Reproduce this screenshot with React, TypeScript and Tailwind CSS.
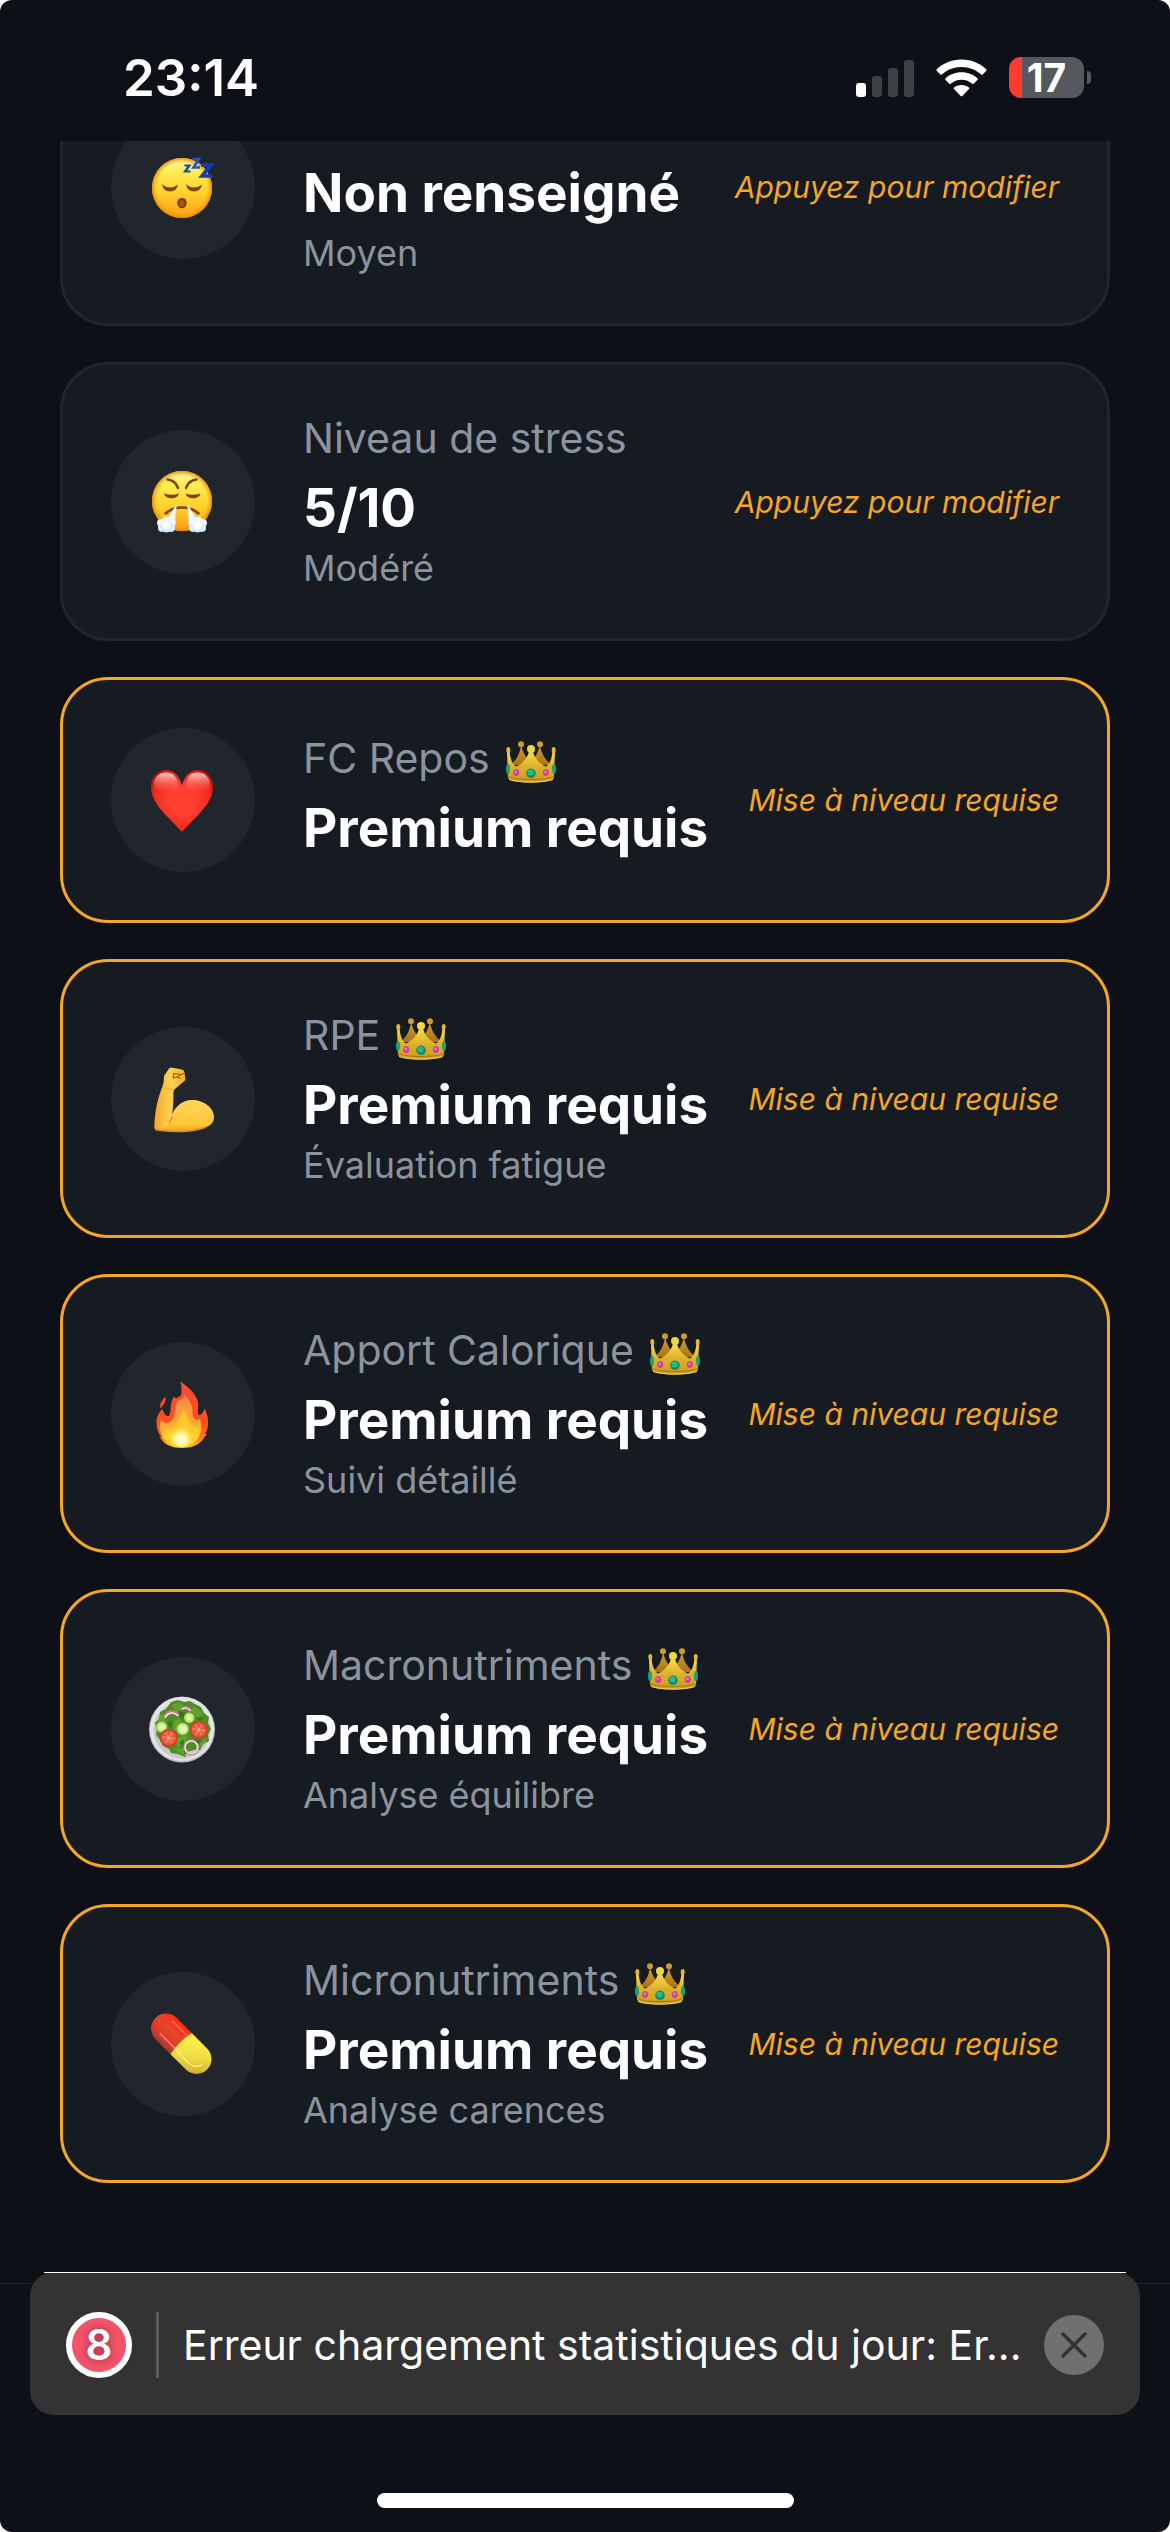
import type { ReactNode } from "react";

function FaceGradient({ id }: { id: string }) {
  return (
    <defs>
      <linearGradient id={id} x1="0" y1="0" x2="0" y2="1">
        <stop offset="0" stopColor="#fff6a8" />
        <stop offset="0.22" stopColor="#ffee55" />
        <stop offset="0.6" stopColor="#ffcf2b" />
        <stop offset="1" stopColor="#fb9d16" />
      </linearGradient>
      <radialGradient id={id + "Rim"} cx="0.5" cy="0.5" r="0.5">
        <stop offset="0.84" stopColor="#f59500" stopOpacity="0" />
        <stop offset="1" stopColor="#ee8a00" stopOpacity="0.9" />
      </radialGradient>
    </defs>
  );
}

function SleepIcon() {
  return (
    <svg viewBox="0 0 72 72" className="size-[72px]" aria-hidden="true">
      <FaceGradient id="sleep" />
      <circle cx="35" cy="37" r="30" fill="url(#sleep)" />
      <circle cx="35" cy="37" r="30" fill="url(#sleepRim)" />
      <path d="M15 33.5 Q23 39.5 31 33.5 Q29.5 40.5 23 40.5 Q16.5 40.5 15 33.5Z" fill="#7d4300" />
      <path d="M39 33.5 Q47 39.5 55 33.5 Q53.5 40.5 47 40.5 Q40.5 40.5 39 33.5Z" fill="#7d4300" />
      <ellipse cx="35" cy="52" rx="4.7" ry="5.3" fill="#7a3d00" />
      <ellipse cx="35" cy="52.5" rx="2.6" ry="3.3" fill="#a35a05" />
      <g fill="none" strokeLinejoin="miter">
        <path d="M37.5 14.5 H42.5 L38 20.5 H43.5" stroke="#1746b5" strokeWidth="2.2" />
        <path d="M45.5 8 H52 L46.5 16.5 H53" stroke="#2456c8" strokeWidth="2.6" />
        <path d="M54 14 H64 L55 25 H65.5" stroke="#123db8" strokeWidth="3.6" />
      </g>
    </svg>
  );
}

function StressIcon() {
  return (
    <svg viewBox="0 0 72 72" className="size-[72px]" aria-hidden="true">
      <FaceGradient id="stress" />
      <defs>
        <radialGradient id="puff" cx="0.5" cy="0.4" r="0.6">
          <stop offset="0.4" stopColor="#ffffff" />
          <stop offset="1" stopColor="#bcdcf8" />
        </radialGradient>
      </defs>
      <circle cx="35" cy="35" r="30" fill="url(#stress)" />
      <circle cx="35" cy="35" r="30" fill="url(#stressRim)" />
      <g fill="none" stroke="#7d4300" strokeWidth="2.4" strokeLinecap="round">
        <path d="M20.5 13.5 Q28.5 14.5 31 22" />
        <path d="M49.5 13.5 Q41.5 14.5 39 22" />
        <path d="M18.5 47.5 Q25 41.5 35 41.5 Q45 41.5 51.5 47.5" />
      </g>
      <path d="M17 27.5 Q24.5 30 32 27.5 Q30.5 32.3 24.5 32.3 Q18.5 32.3 17 27.5Z" fill="#7d4300" />
      <path d="M38.5 27.5 Q46 30 53.5 27.5 Q52 32.3 46 32.3 Q40 32.3 38.5 27.5Z" fill="#7d4300" />
      <path d="M29.5 38.5 L28 55 L18 57Z" fill="#f4faff" stroke="#c9dff2" strokeWidth="0.6" />
      <path d="M40.5 38.5 L42 55 L52 57Z" fill="#f4faff" stroke="#c9dff2" strokeWidth="0.6" />
      <g fill="url(#puff)">
        <circle cx="14" cy="57" r="4" />
        <circle cx="19" cy="55" r="4.5" />
        <circle cx="25" cy="57" r="4" />
        <circle cx="15" cy="62" r="4" />
        <circle cx="24" cy="62" r="4" />
        <circle cx="19.5" cy="60" r="6.5" />
        <circle cx="56" cy="57" r="4" />
        <circle cx="51" cy="55" r="4.5" />
        <circle cx="45" cy="57" r="4" />
        <circle cx="55" cy="62" r="4" />
        <circle cx="46" cy="62" r="4" />
        <circle cx="50.5" cy="60" r="6.5" />
      </g>
    </svg>
  );
}

function HeartIcon() {
  return (
    <svg viewBox="0 0 72 72" className="size-[72px]" aria-hidden="true">
      <defs>
        <radialGradient id="heart" cx="0.5" cy="0.5" r="0.6">
          <stop offset="0.35" stopColor="#ff4030" />
          <stop offset="0.75" stopColor="#f42a1e" />
          <stop offset="1" stopColor="#b40c06" />
        </radialGradient>
        <linearGradient id="heartShine" x1="0" y1="0" x2="0" y2="1">
          <stop offset="0" stopColor="#ffffff" stopOpacity="0.8" />
          <stop offset="1" stopColor="#ff6a5c" stopOpacity="0" />
        </linearGradient>
      </defs>
      <path d="M35 21 C38 11 44 6 51 6 C60 6 66 13 66 23 C66 40 48 53 35 68 C22 53 4 40 4 23 C4 13 10 6 19 6 C26 6 32 11 35 21Z" fill="url(#heart)" />
      <path d="M6.5 22 C7 13 12 8.5 19 8.5 C26 8.5 30 13 31.5 21 C31 30 7 31 6.5 22Z" fill="url(#heartShine)" />
      <path d="M63.5 22 C63 13 58 8.5 51 8.5 C44 8.5 40 13 38.5 21 C39 30 63 31 63.5 22Z" fill="url(#heartShine)" />
    </svg>
  );
}

function ArmIcon() {
  return (
    <svg viewBox="0 0 72 72" className="size-[72px]" aria-hidden="true">
      <defs>
        <linearGradient id="arm" x1="0" y1="0" x2="0" y2="1">
          <stop offset="0" stopColor="#ffd45a" />
          <stop offset="0.75" stopColor="#ffc73b" />
          <stop offset="1" stopColor="#f0a020" />
        </linearGradient>
        <linearGradient id="forearm" x1="0" y1="0" x2="1" y2="0">
          <stop offset="0" stopColor="#f2a526" />
          <stop offset="0.5" stopColor="#ffd152" />
          <stop offset="1" stopColor="#f7b02e" />
        </linearGradient>
      </defs>
      <path d="M24 54 C27 45 34 37 45 37 C57 37 67 45 67 54 C67 60 63 63 57 65 C45 69 28 69.5 22 68 L8 66.5Z" fill="url(#arm)" />
      <path d="M17 13 L22 5.5 Q24 4 27 5 L35 6.5 Q37.5 7 37.5 9.5 L38.5 17 L28 26 Q26 27 26.5 33 C26.5 42 25.5 48 25 54 L20 63 L10 67 Q7 67 7.3 63 C8 50 9.5 39 14.5 26 Q17 21 17 13Z" fill="url(#forearm)" />
      <path d="M25.5 54 L22 59.5" stroke="#d8871a" strokeWidth="1.2" strokeLinecap="round" />
      <path d="M27 26 C23 27 19 26 16.5 24" stroke="#e69a22" strokeWidth="0.8" fill="none" />
      <path d="M26 10.500 L34 11.5 L30 14 L34 15.5 M27 10.5 L26 15 L30 14 M34 11.5 L37 10.5" stroke="#8c5208" strokeWidth="1" fill="none" strokeLinejoin="round" />
      <path d="M9 66.8 C25 69.5 45 69 58 64.5" stroke="#e2921c" strokeWidth="1.6" fill="none" strokeLinecap="round" />
    </svg>
  );
}

function FireIcon() {
  return (
    <svg viewBox="0 0 72 72" className="size-[72px]" aria-hidden="true">
      <defs>
        <linearGradient id="fire" x1="0" y1="0" x2="0" y2="1">
          <stop offset="0" stopColor="#fb4a35" />
          <stop offset="0.6" stopColor="#fd4f1d" />
          <stop offset="0.85" stopColor="#fe7a18" />
          <stop offset="1" stopColor="#fdd21f" />
        </linearGradient>
        <linearGradient id="flame" x1="0" y1="0" x2="0" y2="1">
          <stop offset="0" stopColor="#ff8a45" />
          <stop offset="0.5" stopColor="#ffa336" />
          <stop offset="1" stopColor="#ffe22b" />
        </linearGradient>
        <radialGradient id="core" cx="0.5" cy="0.7" r="0.55">
          <stop offset="0" stopColor="#fffff0" />
          <stop offset="0.5" stopColor="#fff58a" />
          <stop offset="1" stopColor="#ffd21f" stopOpacity="0.2" />
        </radialGradient>
      </defs>
      <path d="M33.5 3.5 C40 8 47 14 50 21 C52.5 27 50 32 51.5 37 C54.5 37.5 56.5 34 57.5 30.5 C60.5 36 61.5 41 61 47 C60.5 52 59 54 58 56 L60 56 L56.5 60.5 C53 66 46 70 35 70 C25 70 18 67 14.5 61.5 L12 58 L14.5 59 C11 55 9.5 50 9.5 44 C9.5 39 12 34 15.5 31 C16.5 35 18.5 38.5 22 38 C25 33 22 26 27 18.5 L29 20.5 L34 17.5 C35 13 34.5 8 33.5 3.5Z" fill="url(#fire)" />
      <path d="M18.5 18.5 C19.5 24 16.5 27 13.5 30.5 C12 26 15 22 18.5 18.5Z" fill="#f6482b" />
      <path d="M37 16.5 C43 22 46 28 45.5 35 C45.5 41 49 43 53 41 C56 50 54 60 46 65 C38 70 24 69 18 62 C13 55 12 48 14 42 C17 46 23 46 26 41 C29 34 27 27 31 23 C34 22 37 21 37 16.5Z" fill="url(#flame)" />
      <path d="M36 31 C41 36 41 43 44 47 C47 49 50 49 51 50 C52 58 47 66 35 69 C24 68 17 60 19 51 C24 53 28 50 30 45 C32 40 35 37 36 31Z" fill="#ffd02c" opacity="0.8" />
      <path d="M37 44 C43 48 48 55 45 62 C43 67 39 69 35 69 C29 69 23 66 22 60 C22 54 32 52 37 44Z" fill="url(#core)" />
    </svg>
  );
}

function Tomato({ x, y }: { x: number; y: number }) {
  return (
    <g>
      <circle cx={x} cy={y} r="9" fill="#d93a26" />
      <circle cx={x} cy={y} r="7.2" fill="#ea5a40" />
      <path
        d={`M${x - 6} ${y - 1} L${x + 6} ${y + 1} M${x - 3} ${y - 5} L${x + 3} ${y + 5} M${x + 3} ${y - 5} L${x - 3} ${y + 5}`}
        stroke="#f49a72"
        strokeWidth="1"
        strokeLinecap="round"
      />
      <circle cx={x} cy={y} r="1.6" fill="#f7b08a" />
    </g>
  );
}

function Cucumber({ x, y, r }: { x: number; y: number; r: number }) {
  return (
    <g>
      <circle cx={x} cy={y} r={r} fill="#8cc152" />
      <circle cx={x} cy={y} r={r - 1} fill="#c8e88a" />
      <circle cx={x} cy={y} r={r - 3} fill="#e3f7a8" />
    </g>
  );
}

function SaladIcon() {
  return (
    <svg viewBox="0 0 72 72" className="size-[72px]" aria-hidden="true">
      <circle cx="35" cy="36.5" r="33" fill="#b9bcbe" />
      <circle cx="35" cy="36" r="32" fill="#e2e4e5" />
      <circle cx="35" cy="37" r="28.5" fill="#c6c9ca" />
      <path d="M24 9 L31 7 L37 9 L43 8 L48 11 L54 14 L57 20 L62 24 L61 30 L64 36 L61 42 L62 48 L56 51 L53 57 L47 57 L40 59 L38 64 L31 61 L24 60 L22 56 L16 53 L13 47 L9 42 L10 36 L8 30 L12 26 L13 19 L19 16Z" fill="#4e8f24" />
      <g fill="#62a22d">
        <path d="M24 12 L33 9 L38 15 L30 19Z" />
        <path d="M46 13 L56 19 L52 26 L44 18Z" />
        <path d="M26 29 L33 25 L35 31 L27 39Z" />
        <path d="M13 22 L20 20 L18 29 L11 29Z" />
        <path d="M30 45 L41 42 L38 52 L30 54Z" />
        <path d="M54 48 L60 45 L58 50 L52 54Z" />
        <path d="M26 56 L37 55 L37 62Z" />
      </g>
      <g fill="#397519">
        <path d="M31 18 L38 20 L36 26 L32 24Z" />
        <path d="M46 46 L56 48 L50 51Z" />
        <path d="M20 30 L27 28 L23 35Z" />
        <path d="M49 24 L57 25 L53 28Z" />
        <path d="M32 50 L37 46 L36 54Z" />
      </g>
      <g fill="none" strokeLinecap="round">
        <path d="M18 23.5 C20 18 28 17 31 22" stroke="#d7709a" strokeWidth="3" />
        <path d="M18.5 24 C21 19.5 27 18.5 30.5 22.5" stroke="#f8e6ee" strokeWidth="1.7" />
        <path d="M35 15.5 C38 13.5 42 14.5 43.5 17" stroke="#d7709a" strokeWidth="2.6" />
        <path d="M35 16 C38 14.5 41 15.5 43 17.5" stroke="#f8e6ee" strokeWidth="1.3" />
        <circle cx="44.3" cy="54.3" r="6.8" stroke="#c9779a" strokeWidth="2.4" />
        <circle cx="44.3" cy="54.3" r="6.3" stroke="#eedfe0" strokeWidth="1.5" />
      </g>
      <Cucumber x={42.3} y={24.8} r={5.5} />
      <Cucumber x={14.7} y={34} r={5.8} />
      <Cucumber x={35.7} y={36} r={6.4} />
      <Tomato x={21.7} y={44.8} />
      <Tomato x={51.7} y={36.8} />
    </svg>
  );
}

function PillIcon() {
  return (
    <svg viewBox="0 0 72 72" className="size-[72px]" aria-hidden="true">
      <defs>
        <linearGradient id="pillRed" x1="0" y1="0" x2="0" y2="1">
          <stop offset="0" stopColor="#fb2c12" />
          <stop offset="0.4" stopColor="#e8452c" />
          <stop offset="0.75" stopColor="#df3a22" />
          <stop offset="1" stopColor="#a8382a" />
        </linearGradient>
        <linearGradient id="pillYellow" x1="0" y1="0" x2="1" y2="1">
          <stop offset="0" stopColor="#fff34a" />
          <stop offset="0.5" stopColor="#f2df45" />
          <stop offset="0.8" stopColor="#d9bb32" />
          <stop offset="1" stopColor="#a8851a" />
        </linearGradient>
      </defs>
      <g transform="rotate(45 34.3 35.8)">
        <path d="M34 20.8 H12.8 A15 15 0 0 0 12.8 50.8 H34Z" fill="url(#pillRed)" />
        <path d="M34 20.8 H55.8 A15 15 0 0 1 55.8 50.8 H34 Q31 35.8 34 20.8Z" fill="url(#pillYellow)" />
        <path d="M12 43.5 H33" stroke="#f4a79a" strokeWidth="1.4" strokeLinecap="round" opacity="0.8" />
        <path d="M33.5 44 H55 Q62 43 64 36" stroke="#fff6a0" strokeWidth="1.4" fill="none" strokeLinecap="round" opacity="0.8" />
        <path d="M12 26 H32" stroke="#ff8a70" strokeWidth="2" strokeLinecap="round" opacity="0.5" />
      </g>
    </svg>
  );
}

function CrownIcon() {
  return (
    <svg viewBox="0 0 50 42" className="h-[42px] w-[50px] shrink-0" role="img" aria-label="Premium">
      <defs>
        <linearGradient id="crownFront" x1="0" y1="0" x2="0" y2="1">
          <stop offset="0" stopColor="#ffe04a" />
          <stop offset="0.55" stopColor="#dcae2c" />
          <stop offset="1" stopColor="#d09b1f" />
        </linearGradient>
        <linearGradient id="crownBack" x1="0" y1="0" x2="0" y2="1">
          <stop offset="0" stopColor="#d3a02a" />
          <stop offset="1" stopColor="#a87318" />
        </linearGradient>
      </defs>
      <path d="M15 4 C14 12 11 19 4 24 L46 24 C39 19 35 12 34 4 C32 12 29 17 25 20 C20 17 17 12 15 4Z" fill="url(#crownBack)" />
      <circle cx="15" cy="3.2" r="3" fill="#cf9c25" />
      <circle cx="34" cy="3.2" r="3" fill="#cf9c25" />
      <path d="M1 10 H3.5 C4 17 6 23 10 25.5 C17 23 22 16 23.5 9 H26.5 C28 16 33 23 40 25.5 C44 23 46 17 46.5 10 H49 L48 37 C44 43 6 43 2 37Z" fill="url(#crownFront)" />
      <circle cx="25" cy="8" r="4" fill="#f6d63c" />
      <ellipse cx="2.3" cy="9" rx="2" ry="3" fill="#e8b52c" />
      <ellipse cx="47.7" cy="9" rx="2" ry="3" fill="#e8b52c" />
      <path d="M2.5 35.5 C10 39.5 40 39.5 47.5 35.5" stroke="#a87614" strokeWidth="1" fill="none" />
      <path d="M3 38.5 C12 42 38 42 47 38.5" stroke="#f6d860" strokeWidth="1" fill="none" />
      <ellipse cx="2" cy="28" rx="2" ry="5" fill="#17a277" />
      <ellipse cx="48" cy="28" rx="2" ry="5" fill="#17a277" />
      <circle cx="25" cy="32.3" r="4.8" fill="#0b8f6a" />
      <circle cx="24.5" cy="31.5" r="3" fill="#27b98c" />
      <ellipse cx="10.2" cy="31.5" rx="3" ry="3.6" fill="#cf3fa0" />
      <ellipse cx="39.8" cy="31.5" rx="3" ry="3.6" fill="#cf3fa0" />
      <circle cx="9.8" cy="30.8" r="1.4" fill="#e87cc6" />
      <circle cx="39.4" cy="30.8" r="1.4" fill="#e87cc6" />
    </svg>
  );
}

function StatusBar() {
  return (
    <header className="flex h-[141px] shrink-0 items-center justify-between pt-3.5 pr-[79px] pl-[123px]">
      <time className="text-[51px] leading-[60px] font-semibold text-white">23:14</time>
      <div className="flex items-center gap-[22px]">
        <svg viewBox="0 0 58 38" className="h-[38px] w-[58px]" aria-label="Signal" role="img">
          <rect x="0" y="24" width="10" height="14" rx="3" fill="#ffffff" />
          <rect x="16" y="17" width="10" height="21" rx="3" fill="#3d4045" />
          <rect x="32" y="9" width="10" height="29" rx="3" fill="#3d4045" />
          <rect x="48" y="1" width="10" height="37" rx="3" fill="#3d4045" />
        </svg>
        <svg viewBox="0 0 51 38" className="h-[38px] w-[51px]" aria-label="Wi-Fi" role="img">
          <g fill="#ffffff">
            <path d="M25.5 0.5 C35.5 0.5 44.3 4.5 50.3 10.3 Q51 11 50.3 11.7 L46.6 15.6 Q46 16.2 45.3 15.6 C40 10.8 33.2 8 25.5 8 C17.8 8 11 10.8 5.7 15.6 Q5 16.2 4.4 15.6 L0.7 11.7 Q0 11 0.7 10.3 C6.7 4.5 15.5 0.5 25.5 0.5Z" />
            <path d="M25.5 13.3 C32 13.3 37.5 15.7 41.6 19.4 Q42.3 20.1 41.6 20.8 L37.7 24.8 Q37.1 25.3 36.4 24.8 C33.4 22.3 29.7 20.7 25.5 20.7 C21.3 20.7 17.6 22.3 14.6 24.8 Q13.9 25.3 13.3 24.8 L9.4 20.8 Q8.7 20.1 9.4 19.4 C13.5 15.7 19 13.3 25.5 13.3Z" />
            <path d="M25.5 26 C28.4 26 31 27 33 28.5 Q33.8 29.2 33 29.9 L26.3 37.1 Q25.5 37.9 24.7 37.1 L18 29.9 Q17.2 29.2 18 28.5 C20 27 22.6 26 25.5 26Z" />
          </g>
        </svg>
        <div className="flex items-center gap-[3px]">
          <div className="flex h-[41px] w-[75px] items-center justify-center rounded-[12px] bg-linear-to-r from-[#ff3b30] from-[17%] to-[#55585d] to-[17%]">
            <span className="text-[39px] leading-[41px] font-bold text-white">17</span>
          </div>
          <div className="h-[13px] w-1 rounded-r-full bg-[#55585d]" />
        </div>
      </div>
    </header>
  );
}

type Metric = {
  id: string;
  icon: ReactNode;
  label?: string;
  value: string;
  note?: string;
  premium?: boolean;
};

const metrics: Metric[] = [
  { id: "sleep", icon: <SleepIcon />, value: "Non renseigné", note: "Moyen" },
  { id: "stress", icon: <StressIcon />, label: "Niveau de stress", value: "5/10", note: "Modéré" },
  { id: "heart", icon: <HeartIcon />, label: "FC Repos", value: "Premium requis", premium: true },
  { id: "rpe", icon: <ArmIcon />, label: "RPE", value: "Premium requis", note: "Évaluation fatigue", premium: true },
  { id: "calories", icon: <FireIcon />, label: "Apport Calorique", value: "Premium requis", note: "Suivi détaillé", premium: true },
  { id: "macros", icon: <SaladIcon />, label: "Macronutriments", value: "Premium requis", note: "Analyse équilibre", premium: true },
  { id: "micros", icon: <PillIcon />, label: "Micronutriments", value: "Premium requis", note: "Analyse carences", premium: true },
];

function MetricCard({ icon, label, value, note, premium }: Metric) {
  return (
    <button
      type="button"
      className={
        premium
          ? "flex w-full items-center rounded-[48px] border-3 border-[#f5a623] bg-[#161b22] p-12 text-left"
          : "flex w-full items-center rounded-[48px] border-3 border-[#21262d] bg-[#161b22] p-12 text-left"
      }
    >
      <span className="flex size-36 shrink-0 items-center justify-center rounded-full bg-[#21262d]">{icon}</span>
      <span className="ml-12 flex min-w-0 flex-1 flex-col whitespace-nowrap">
        <span className="mb-3 flex min-h-[50px] items-end gap-4 text-[41px] leading-[50px] text-[#8b949e]">
          {label}
          {premium && <CrownIcon />}
        </span>
        <span className="mb-1.5 text-[53px] leading-[66px] font-bold text-white">{value}</span>
        {note && <span className="text-[36px] leading-[43px] text-[#8b949e]">{note}</span>}
      </span>
      <span className="shrink-0 text-[30px] leading-9 whitespace-nowrap text-[#f5a623] italic">
        {premium ? "Mise à niveau requise" : "Appuyez pour modifier"}
      </span>
    </button>
  );
}

function ErrorToast() {
  return (
    <div role="alert" className="relative mx-[30px] -mt-3 flex items-center gap-6 rounded-[24px] bg-[#333333] px-9 pt-10 pb-[37px]">
      <div className="absolute inset-x-3.5 top-0 h-px bg-white" />
      <span className="flex size-[66px] shrink-0 items-center justify-center rounded-full border-6 border-white bg-[#f35369] text-[42px] leading-[54px] font-semibold text-white [text-shadow:0_0_9px_rgba(0,0,0,0.4)]">
        8
      </span>
      <div className="h-[66px] w-[3px] shrink-0 bg-[#5c5c5c]" />
      <p className="min-w-0 flex-1 text-[41px] leading-[50px] whitespace-nowrap text-white">
        Erreur chargement statistiques du jour: Er...
      </p>
      <button
        type="button"
        aria-label="Fermer"
        className="flex size-[60px] shrink-0 items-center justify-center rounded-full bg-[#707070]"
      >
        <svg viewBox="0 0 26 26" className="size-[26px]" aria-hidden="true">
          <path d="M2 2 L24 24 M24 2 L2 24" stroke="#333333" strokeWidth="3.5" strokeLinecap="round" />
        </svg>
      </button>
    </div>
  );
}

export default function App() {
  return (
    <div className="min-h-screen bg-white">
      <div className="flex min-h-screen flex-col overflow-hidden rounded-[12px] bg-[#0d1117] font-['Inter',sans-serif]">
        <StatusBar />
        <main className="flex-1 overflow-hidden">
          <div className="-mt-[94px] flex flex-col gap-9 px-[60px] pb-[100px]">
            {metrics.map((metric) => (
              <MetricCard key={metric.id} {...metric} />
            ))}
          </div>
        </main>
        <footer className="border-t border-[#21262d] pb-6">
          <ErrorToast />
          <div className="mx-auto mt-[78px] h-[15px] w-[417px] rounded-full bg-white" />
        </footer>
      </div>
    </div>
  );
}
